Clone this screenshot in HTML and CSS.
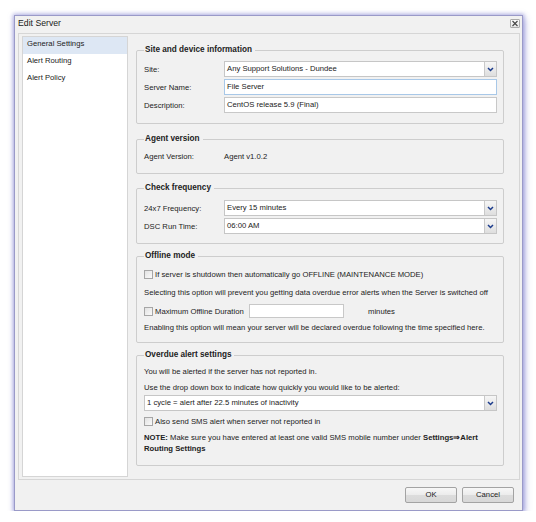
FILE: index.html
```html
<!DOCTYPE html>
<html>
<head>
<meta charset="utf-8">
<link rel="stylesheet" href="styles.css">
</head>
<body>
<div class="window">
  <div class="titlebar">
    <span class="title">Edit Server</span>
    <span class="close"><svg width="8" height="7" viewBox="0 0 8 7"><path d="M1.5 1 L6.5 6 M6.5 1 L1.5 6" stroke="#444" stroke-width="1.1" fill="none"/></svg></span>
  </div>
  <div class="frame">
    <ul class="nav">
      <li class="sel">General Settings</li>
      <li>Alert Routing</li>
      <li>Alert Policy</li>
    </ul>
    <div class="content">
      <fieldset class="fs fs-site">
        <legend>Site and device information</legend>
        <div class="row"><span class="lbl">Site:</span>
          <div class="select"><span class="val">Any Support Solutions - Dundee</span><span class="arrow"><svg width="7" height="5" viewBox="0 0 7 5"><path d="M1 1 L3.5 3.5 L6 1" stroke="#1c3c8c" stroke-width="1.5" fill="none"/></svg></span></div>
        </div>
        <div class="row"><span class="lbl">Server Name:</span>
          <div class="input focus">File Server</div>
        </div>
        <div class="row"><span class="lbl">Description:</span>
          <div class="input">CentOS release 5.9 (Final)</div>
        </div>
      </fieldset>

      <fieldset class="fs fs-agent">
        <legend>Agent version</legend>
        <div class="row text-row"><span class="lbl">Agent Version:</span><span>Agent v1.0.2</span></div>
      </fieldset>

      <fieldset class="fs fs-check">
        <legend>Check frequency</legend>
        <div class="row"><span class="lbl">24x7 Frequency:</span>
          <div class="select"><span class="val">Every 15 minutes</span><span class="arrow"><svg width="7" height="5" viewBox="0 0 7 5"><path d="M1 1 L3.5 3.5 L6 1" stroke="#1c3c8c" stroke-width="1.5" fill="none"/></svg></span></div>
        </div>
        <div class="row"><span class="lbl">DSC Run Time:</span>
          <div class="select"><span class="val">06:00 AM</span><span class="arrow"><svg width="7" height="5" viewBox="0 0 7 5"><path d="M1 1 L3.5 3.5 L6 1" stroke="#1c3c8c" stroke-width="1.5" fill="none"/></svg></span></div>
        </div>
      </fieldset>

      <fieldset class="fs fs-offline">
        <legend>Offline mode</legend>
        <div class="row"><span class="check"></span><span>If server is shutdown then automatically go OFFLINE (MAINTENANCE MODE)</span></div>
        <div class="row"><span>Selecting this option will prevent you getting data overdue error alerts when the Server is switched off</span></div>
        <div class="row"><span class="check-label"><span class="check"></span><span>Maximum Offline Duration</span></span><div class="input small"></div><span class="unit">minutes</span></div>
        <div class="row short"><span>Enabling this option will mean your server will be declared overdue following the time specified here.</span></div>
      </fieldset>

      <fieldset class="fs fs-overdue">
        <legend>Overdue alert settings</legend>
        <div class="row short"><span>You will be alerted if the server has not reported in.</span></div>
        <div class="row short gap"><span>Use the drop down box to indicate how quickly you would like to be alerted:</span></div>
        <div class="row tight">
          <div class="select"><span class="val">1 cycle = alert after 22.5 minutes of inactivity</span><span class="arrow"><svg width="7" height="5" viewBox="0 0 7 5"><path d="M1 1 L3.5 3.5 L6 1" stroke="#1c3c8c" stroke-width="1.5" fill="none"/></svg></span></div>
        </div>
        <div class="row"><span class="check"></span><span>Also send SMS alert when server not reported in</span></div>
        <p class="note"><b>NOTE:</b> Make sure you have entered at least one valid SMS mobile number under <b>Settings⇒Alert</b> <b>Routing Settings</b></p>
      </fieldset>
    </div>
  </div>
  <div class="buttons">
    <button class="btn">OK</button>
    <button class="btn">Cancel</button>
  </div>
</div>
</body>
</html>
```
FILE: styles.css
```css
html, body {
  margin: 0;
  padding: 0;
  background: #ffffff;
}
body {
  font-family: "Liberation Sans", Arial, sans-serif;
  font-size: 7.7px;
  color: #222;
}
.window {
  margin: 15px 0 0 14px;
  width: 509px;
  height: 496px;
  box-sizing: border-box;
  background: #f1f1f1;
  border: 1px solid #9a9ac8;
  box-shadow: 0 0 4px 1px rgba(120, 120, 205, 0.55), 2px 3px 7px rgba(110, 110, 200, 0.45);
  display: flex;
  flex-direction: column;
}
.titlebar {
  height: 17px;
  display: flex;
  justify-content: space-between;
  align-items: flex-start;
  padding-left: 3px;
}
.title {
  font-size: 8.7px;
  line-height: 15px;
  color: #1a1a1a;
}
.close {
  margin: 3px 2px 0 0;
  width: 10px;
  height: 9px;
  box-sizing: border-box;
  border: 1px solid #ababab;
  border-radius: 1px;
  background: linear-gradient(#fbfbfb, #e6e6e6);
  display: flex;
  align-items: center;
  justify-content: center;
}
.close svg { display: block; }
.frame {
  margin: 0 2px 0 3px;
  height: 447px;
  box-sizing: border-box;
  border: 1px solid #d6d6d6;
  padding: 2px 0 2px 3px;
  display: flex;
}
.nav {
  list-style: none;
  margin: 0;
  padding: 0;
  width: 106px;
  box-sizing: border-box;
  border: 1px solid #d5d5d5;
  background: #ffffff;
}
.nav li {
  height: 17px;
  line-height: 13px;
  padding: 0 4px;
  margin: 0;
}
.nav li.sel {
  background: #dde7f4;
}
.content {
  flex: 1;
  padding: 8px 0 0 8px;
}
.fs {
  width: 368px;
  box-sizing: border-box;
  margin: 0 0 6px 0;
  border: 1px solid #cdcdcd;
  border-radius: 2px;
  padding: 0 6px 0 7px;
  min-width: 0;
}
.fs legend {
  font-weight: bold;
  font-size: 8.2px;
  line-height: 12px;
  padding: 0 3px 0 1px;
  color: #222;
}
.row {
  display: flex;
  align-items: center;
  height: 16px;
  margin-bottom: 2px;
  white-space: nowrap;
}
.row:last-child { margin-bottom: 0; }
.lbl {
  width: 80px;
  flex: none;
}
.fs-site { padding-top: 5px; padding-bottom: 10px; margin-bottom: 9px; }
.fs-agent { padding-top: 3px; padding-bottom: 9px; margin-bottom: 8px; }
.fs-check { padding-top: 6px; padding-bottom: 9px; }
.fs-offline { padding-top: 4px; padding-bottom: 8px; }
.fs-overdue { padding-top: 3px; padding-bottom: 11px; }
.row.short { height: 14px; margin-bottom: 2px; }
.fs-offline .row.short { margin-bottom: 0; }
.fs-offline .row:nth-child(3) { margin-bottom: 3px; }
.fs-offline .row:nth-child(4) { margin-bottom: 1px; }
.row.gap { margin-bottom: 1px; }
.select {
  flex: 1;
  height: 16px;
  box-sizing: border-box;
  border: 1px solid #c6c6c6;
  background: #ffffff;
  display: flex;
  align-items: stretch;
}
.select .val {
  flex: 1;
  padding-left: 2px;
  line-height: 14px;
}
.arrow {
  width: 11px;
  border-left: 1px solid #c9c9c9;
  background: linear-gradient(#f6f6f6, #dedede);
  display: flex;
  align-items: center;
  justify-content: center;
}
.arrow svg { display: block; }
.input {
  flex: 1;
  height: 16px;
  box-sizing: border-box;
  border: 1px solid #c8c8c8;
  background: #ffffff;
  padding-left: 2px;
  line-height: 14px;
}
.input.focus {
  border-color: #a8c8e8;
}
.input.small {
  flex: none;
  width: 95px;
  height: 14px;
}
.unit {
  margin-left: 24px;
}
.check {
  width: 9px;
  height: 9px;
  box-sizing: border-box;
  border: 1px solid #a6a6a6;
  background: linear-gradient(135deg, #e2e2e2, #fafafa);
  margin-right: 2px;
  flex: none;
}
.check-label {
  width: 105px;
  display: flex;
  align-items: center;
  flex: none;
}
.note {
  margin: 3px 0 0 0;
  line-height: 11px;
  width: 352px;
}
.note b { font-weight: bold; }
.buttons {
  display: flex;
  justify-content: flex-end;
  gap: 5px;
  padding: 7px 8px 0 0;
}
.btn {
  width: 52px;
  height: 16px;
  margin: 0;
  padding: 0;
  box-sizing: border-box;
  border: 1px solid #a3a3a3;
  border-radius: 2px;
  background: linear-gradient(#f7f7f7 0%, #ececec 50%, #dcdcdc 51%, #d8d8d8 100%);
  font-family: "Liberation Sans", Arial, sans-serif;
  font-size: 7.7px;
  color: #222;
  line-height: 14px;
}
```
